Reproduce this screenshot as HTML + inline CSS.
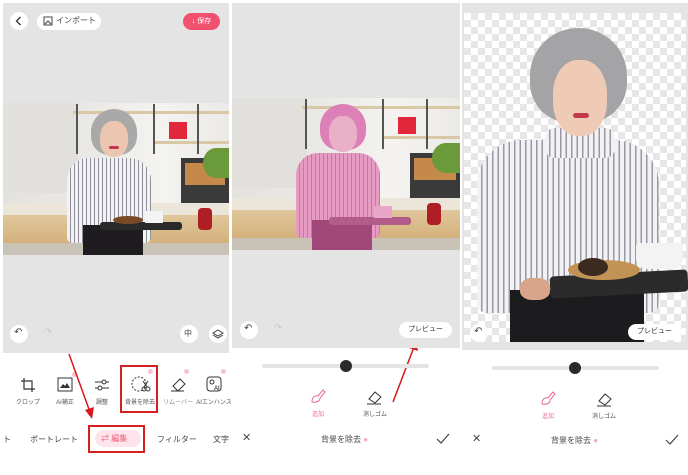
<!DOCTYPE html>
<html><head><meta charset="utf-8">
<style>
*{margin:0;padding:0;box-sizing:border-box}
body{width:688px;height:475px;background:#fff;position:relative;overflow:hidden;font-family:"Liberation Sans","Noto Sans CJK JP",sans-serif;color:#333}
.a{position:absolute}
.gray{background:#e4e4e4}
.scene{position:absolute;width:226px;height:152px;overflow:hidden;background:linear-gradient(90deg,#e4e2df 0,#ebe9e6 40%,#f4f3f0 70%,#eceae6 100%)}
.lbl{position:absolute;font-size:6px;color:#555;white-space:nowrap;transform:translateX(-50%)}
.circ{position:absolute;border-radius:50%;background:#fff}
.shirt{background:repeating-linear-gradient(90deg,#f2f2f4 0 3px,#8f8f9a 3px 4px)}
</style></head><body>

<!-- PANEL 1 -->
<div class="a gray" style="left:3px;top:3px;width:226px;height:350px"></div>
<div class="circ" style="left:10px;top:12px;width:18px;height:18px"></div>
<svg class="a" style="left:10px;top:12px" width="18" height="18"><path d="M10.5 5 L6.5 9 L10.5 13" stroke="#333" stroke-width="1.3" fill="none"/></svg>
<div class="a" style="left:37px;top:13px;width:64px;height:17px;border-radius:9px;background:#fff"></div>
<svg class="a" style="left:43px;top:16px" width="11" height="11"><rect x="1" y="1" width="8" height="8" fill="none" stroke="#444" stroke-width="1"/><path d="M2 8 L5 5 L8 8" stroke="#444" fill="none"/></svg>
<div class="a" style="left:56px;top:15px;font-size:8px;color:#444">インポート</div>
<div class="a" style="left:183px;top:13px;width:37px;height:17px;border-radius:9px;background:#f2506f;color:#fff;font-size:7px;line-height:17px;text-align:center">↓ 保存</div>

<div class="scene" style="left:3px;top:103px">
  <div class="a" style="left:0;top:0;width:75px;height:90px;background:#e2e0dc"></div>
  <div class="a" style="left:70px;top:8px;width:90px;height:3px;background:#d9c8a6"></div>
  <div class="a" style="left:150px;top:8px;width:76px;height:3px;background:#d9c8a6"></div>
  <div class="a" style="left:150px;top:38px;width:76px;height:3px;background:#d9c8a6"></div>
  <div class="a" style="left:150px;top:1px;width:2px;height:50px;background:#555"></div>
  <div class="a" style="left:194px;top:1px;width:2px;height:50px;background:#555"></div>
  <div class="a" style="left:73px;top:1px;width:2px;height:50px;background:#555"></div>
  <div class="a" style="left:166px;top:19px;width:18px;height:17px;background:#e0283a"></div>
  <div class="a" style="left:178px;top:55px;width:48px;height:48px;background:#3a3a3a"></div>
  <div class="a" style="left:182px;top:60px;width:40px;height:22px;background:#c58a4a"></div>
  <div class="a" style="left:200px;top:45px;width:26px;height:30px;background:#6a9a3a;border-radius:50% 0 0 50%"></div>
  <div class="a" style="left:0;top:100px;width:226px;height:12px;background:#ece6da"></div>
  <div class="a" style="left:0;top:112px;width:226px;height:28px;background:linear-gradient(#e0c79c,#d4b17c)"></div>
  <div class="a" style="left:0;top:140px;width:226px;height:12px;background:#c9c2b6"></div>
  <div class="a" style="left:195px;top:105px;width:14px;height:22px;background:#b01e25;border-radius:4px"></div>
  <div class="a shirt" style="left:64px;top:55px;width:84px;height:85px;border-radius:22px 22px 6px 6px"></div>
  <div class="a" style="left:80px;top:122px;width:60px;height:30px;background:#1e1c1e"></div>
  <div class="a" style="left:97px;top:119px;width:82px;height:8px;background:#2a2a2a;border-radius:3px"></div>
  <div class="a" style="left:110px;top:113px;width:30px;height:8px;background:#7a4a26;border-radius:50%"></div>
  <div class="a" style="left:142px;top:108px;width:18px;height:12px;background:#f4f4f4"></div>
  <div class="a" style="left:88px;top:6px;width:46px;height:46px;background:#a9a9a9;border-radius:50% 50% 40% 40%"></div>
  <div class="a" style="left:97px;top:18px;width:28px;height:36px;background:#ecc6b0;border-radius:45%"></div>
  <div class="a" style="left:106px;top:43px;width:10px;height:3px;background:#c0394a;border-radius:2px"></div>
</div>

<div class="circ" style="left:10px;top:325px;width:18px;height:18px"></div>
<div class="a" style="left:14px;top:327px;font-size:10px;color:#444">↶</div>
<div class="a" style="left:44px;top:327px;font-size:10px;color:#c8c8c8">↷</div>
<div class="circ" style="left:180px;top:325px;width:18px;height:18px"></div>
<div class="a" style="left:184px;top:328px;font-size:8px;color:#444">中</div>
<div class="circ" style="left:209px;top:325px;width:18px;height:18px"></div>
<svg class="a" style="left:212px;top:328px" width="12" height="12"><path d="M6 2 L11 5 L6 8 L1 5Z M1 7 L6 10 L11 7" stroke="#444" fill="none"/></svg>

<!-- tools -->
<svg class="a" style="left:20px;top:377px" width="16" height="16"><path d="M4 1 V12 H15 M1 4 H12 V15" stroke="#333" fill="none" stroke-width="1.2"/></svg>
<div class="lbl" style="left:28px;top:397px">クロップ</div>
<svg class="a" style="left:57px;top:377px" width="16" height="16"><rect x="1" y="1" width="14" height="13" fill="none" stroke="#333"/><path d="M3 11 L6 7 L8 9 L10 6 L13 11Z" fill="#333"/></svg>
<div class="lbl" style="left:65px;top:397px">AI補正</div>
<div class="a" style="left:72px;top:372px;width:5px;height:5px;border-radius:50%;background:#f3c4d2"></div>
<svg class="a" style="left:94px;top:377px" width="16" height="16"><path d="M1 5 H15 M1 11 H15" stroke="#333"/><circle cx="10" cy="5" r="2" fill="#fff" stroke="#333"/><circle cx="6" cy="11" r="2" fill="#fff" stroke="#333"/></svg>
<div class="lbl" style="left:102px;top:397px">調整</div>
<svg class="a" style="left:131px;top:375px" width="20" height="18"><circle cx="8" cy="9" r="7" fill="none" stroke="#333" stroke-dasharray="2 1.5"/><circle cx="13" cy="14" r="2" fill="none" stroke="#333"/><circle cx="17" cy="14" r="2" fill="none" stroke="#333"/><path d="M12 6 L16 12 M17 6 L13 12" stroke="#333"/></svg>
<div class="lbl" style="left:140px;top:397px">背景を除去</div>
<div class="a" style="left:148px;top:369px;width:5px;height:5px;border-radius:50%;background:#f3c4d2"></div>
<div class="a" style="left:120px;top:365px;width:38px;height:48px;border:2px solid #d42020"></div>
<svg class="a" style="left:170px;top:376px" width="18" height="16"><path d="M3 10 L10 3 L15 8 L8 15 Z M1 15 H14" stroke="#333" fill="none"/></svg>
<div class="lbl" style="left:178px;top:397px;color:#888">リムーバー</div>
<div class="a" style="left:184px;top:369px;width:5px;height:5px;border-radius:50%;background:#f3c4d2"></div>
<svg class="a" style="left:206px;top:376px" width="16" height="16"><rect x="1" y="1" width="14" height="14" rx="3" fill="none" stroke="#333"/><circle cx="6" cy="6" r="2" fill="none" stroke="#333"/><text x="8" y="14" font-size="6" font-family="Liberation Sans">AI</text></svg>
<div class="lbl" style="left:214px;top:397px">AIエンハンス</div>
<div class="a" style="left:221px;top:369px;width:5px;height:5px;border-radius:50%;background:#f3c4d2"></div>

<div class="a" style="left:3px;top:434px;font-size:8px;color:#444">ト</div>
<div class="a" style="left:30px;top:434px;font-size:8px;color:#444">ポートレート</div>
<div class="a" style="left:95px;top:430px;width:46px;height:17px;border-radius:9px;background:#fde3ea"></div>
<div class="a" style="left:101px;top:433px;font-size:8px;color:#ef5a7c">⇄ 編集</div>
<div class="a" style="left:88px;top:425px;width:57px;height:28px;border:2px solid #d42020"></div>
<div class="a" style="left:157px;top:434px;font-size:8px;color:#444">フィルター</div>
<div class="a" style="left:213px;top:434px;font-size:8px;color:#444">文字</div>
<svg class="a" style="left:0;top:0" width="688" height="475"><line x1="69" y1="354" x2="90" y2="412" stroke="#d8181c" stroke-width="1.5"/><path d="M85 410 L92 419 L94 407Z" fill="#d8181c"/>
<line x1="393" y1="402" x2="414" y2="347" stroke="#d8181c" stroke-width="1.5"/><path d="M409 348 L416 340 L418 351Z" fill="#d8181c"/></svg>

<!-- PANEL 2 -->
<div class="a gray" style="left:232px;top:3px;width:228px;height:345px"></div>
<div class="scene" style="left:232px;top:98px;width:228px">
  <div class="a" style="left:0;top:0;width:75px;height:90px;background:#e2e0dc"></div>
  <div class="a" style="left:70px;top:8px;width:90px;height:3px;background:#d9c8a6"></div>
  <div class="a" style="left:150px;top:8px;width:78px;height:3px;background:#d9c8a6"></div>
  <div class="a" style="left:150px;top:38px;width:78px;height:3px;background:#d9c8a6"></div>
  <div class="a" style="left:150px;top:1px;width:2px;height:50px;background:#555"></div>
  <div class="a" style="left:194px;top:1px;width:2px;height:50px;background:#555"></div>
  <div class="a" style="left:73px;top:1px;width:2px;height:50px;background:#555"></div>
  <div class="a" style="left:166px;top:19px;width:18px;height:17px;background:#e0283a"></div>
  <div class="a" style="left:178px;top:55px;width:50px;height:48px;background:#3a3a3a"></div>
  <div class="a" style="left:182px;top:60px;width:42px;height:22px;background:#c58a4a"></div>
  <div class="a" style="left:200px;top:45px;width:28px;height:30px;background:#6a9a3a;border-radius:50% 0 0 50%"></div>
  <div class="a" style="left:0;top:100px;width:228px;height:12px;background:#ece6da"></div>
  <div class="a" style="left:0;top:112px;width:228px;height:28px;background:linear-gradient(#e0c79c,#d4b17c)"></div>
  <div class="a" style="left:0;top:140px;width:228px;height:12px;background:#c9c2b6"></div>
  <div class="a" style="left:195px;top:105px;width:14px;height:22px;background:#b01e25;border-radius:4px"></div>
  <div class="a" style="left:64px;top:55px;width:84px;height:85px;border-radius:22px 22px 6px 6px;background:repeating-linear-gradient(90deg,#e79bc2 0 3px,#cf72a4 3px 4px)"></div>
  <div class="a" style="left:80px;top:122px;width:60px;height:30px;background:#a2477a"></div>
  <div class="a" style="left:97px;top:119px;width:82px;height:8px;background:#b25c8a;border-radius:3px"></div>
  <div class="a" style="left:142px;top:108px;width:18px;height:12px;background:#e9a6c8"></div>
  <div class="a" style="left:88px;top:6px;width:46px;height:46px;background:#dd80b8;border-radius:50% 50% 40% 40%"></div>
  <div class="a" style="left:97px;top:18px;width:28px;height:36px;background:#eab0c8;border-radius:45%"></div>
</div>
<div class="circ" style="left:240px;top:321px;width:18px;height:18px"></div>
<div class="a" style="left:244px;top:323px;font-size:10px;color:#444">↶</div>
<div class="a" style="left:274px;top:323px;font-size:10px;color:#c8c8c8">↷</div>
<div class="a" style="left:399px;top:322px;width:53px;height:16px;border-radius:8px;background:#fff;font-size:7px;line-height:16px;text-align:center;color:#333">プレビュー</div>
<div class="a" style="left:262px;top:364px;width:167px;height:4px;border-radius:2px;background:#e4e4e4"></div>
<div class="a" style="left:340px;top:360px;width:12px;height:12px;border-radius:50%;background:#2a2a2a"></div>
<svg class="a" style="left:310px;top:388px" width="16" height="16"><path d="M2 14 C2 9 5 7 8 8 L13 2 L15 4 L10 10 C10 13 7 15 2 14Z" fill="none" stroke="#e56b98" stroke-width="1"/></svg>
<div class="lbl" style="left:318px;top:409px;color:#e56b98">追加</div>
<svg class="a" style="left:366px;top:389px" width="18" height="16"><path d="M3 10 L9 3 L15 8 L9 14 Z M1 15 H15" stroke="#333" fill="none"/></svg>
<div class="lbl" style="left:375px;top:409px">消しゴム</div>
<div class="a" style="left:242px;top:431px;font-size:11px;color:#444">✕</div>
<div class="a" style="left:321px;top:434px;font-size:8px;color:#444">背景を除去 <span style="color:#f0a8c0">●</span></div>
<svg class="a" style="left:436px;top:433px" width="14" height="12"><path d="M1 6 L5 10 L13 1" stroke="#444" fill="none" stroke-width="1.2"/></svg>

<!-- PANEL 3 -->
<div class="a gray" style="left:462px;top:3px;width:226px;height:347px"></div>
<div class="a" style="left:464px;top:13px;width:222px;height:329px;background-color:#fff;background-image:conic-gradient(#e6e6e6 25%,#fff 0 50%,#e6e6e6 0 75%,#fff 0);background-size:14px 14px"></div>
<div class="a" style="left:477px;top:140px;width:182px;height:173px;border-radius:45px 45px 10px 10px;background:repeating-linear-gradient(90deg,#f2f2f4 0 4px,#9898a4 4px 5.5px)"></div>
<div class="a" style="left:545px;top:128px;width:70px;height:30px;border-radius:10px;background:repeating-linear-gradient(90deg,#f2f2f4 0 4px,#9898a4 4px 5.5px)"></div>
<div class="a" style="left:510px;top:290px;width:134px;height:52px;background:#1c1b1d"></div>
<div class="a" style="left:550px;top:273px;width:138px;height:22px;background:#2b2b2b;border-radius:4px;transform:rotate(-3deg)"></div>
<div class="a" style="left:568px;top:260px;width:72px;height:20px;background:#c39255;border-radius:50%"></div>
<div class="a" style="left:578px;top:258px;width:30px;height:18px;background:#3b2a20;border-radius:50%"></div>
<div class="a" style="left:636px;top:243px;width:47px;height:26px;background:#f3f3f3;border-radius:3px 3px 10px 10px"></div>
<div class="a" style="left:520px;top:278px;width:30px;height:22px;background:#d9a48a;border-radius:40%"></div>
<div class="a" style="left:530px;top:28px;width:97px;height:95px;background:#a4a4a6;border-radius:50% 50% 42% 42%"></div>
<div class="a" style="left:553px;top:60px;width:54px;height:76px;background:#efcbb6;border-radius:45%"></div>
<div class="a" style="left:573px;top:113px;width:16px;height:5px;background:#c43a4d;border-radius:3px"></div>
<div class="circ" style="left:470px;top:324px;width:18px;height:18px"></div>
<div class="a" style="left:474px;top:326px;font-size:10px;color:#444">↶</div>
<div class="a" style="left:628px;top:324px;width:53px;height:16px;border-radius:8px;background:#fff;font-size:7px;line-height:16px;text-align:center;color:#333">プレビュー</div>
<div class="a" style="left:492px;top:366px;width:167px;height:4px;border-radius:2px;background:#e4e4e4"></div>
<div class="a" style="left:569px;top:362px;width:12px;height:12px;border-radius:50%;background:#2a2a2a"></div>
<svg class="a" style="left:540px;top:390px" width="16" height="16"><path d="M2 14 C2 9 5 7 8 8 L13 2 L15 4 L10 10 C10 13 7 15 2 14Z" fill="none" stroke="#e56b98" stroke-width="1"/></svg>
<div class="lbl" style="left:548px;top:411px;color:#e56b98">追加</div>
<svg class="a" style="left:596px;top:391px" width="18" height="16"><path d="M3 10 L9 3 L15 8 L9 14 Z M1 15 H15" stroke="#333" fill="none"/></svg>
<div class="lbl" style="left:604px;top:411px">消しゴム</div>
<div class="a" style="left:472px;top:432px;font-size:11px;color:#444">✕</div>
<div class="a" style="left:551px;top:435px;font-size:8px;color:#444">背景を除去 <span style="color:#f0a8c0">●</span></div>
<svg class="a" style="left:665px;top:434px" width="14" height="12"><path d="M1 6 L5 10 L13 1" stroke="#444" fill="none" stroke-width="1.2"/></svg>
</body></html>
